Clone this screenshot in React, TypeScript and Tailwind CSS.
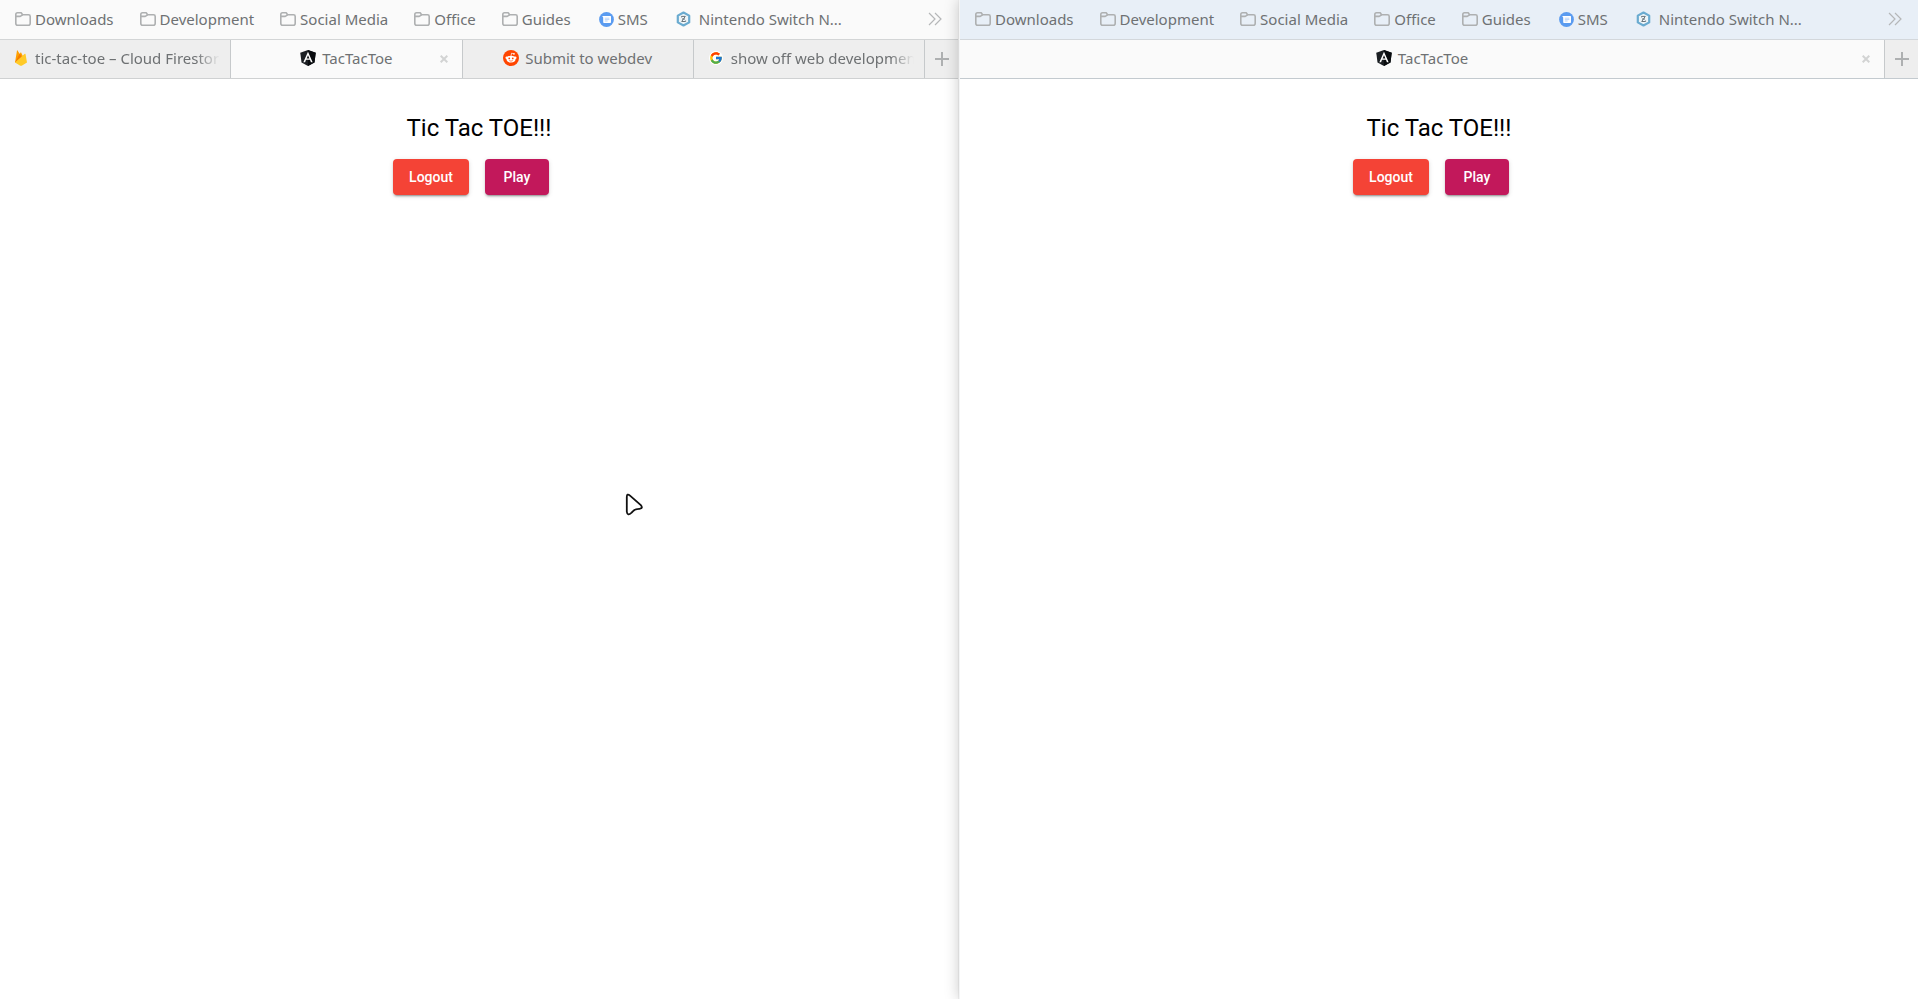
import type { ReactNode } from "react";
import { FcGoogle } from "react-icons/fc";

function FolderIcon() {
  return (
    <svg className="h-4 w-4 shrink-0" viewBox="0 0 16 16" fill="none" stroke="#aeb0b1" strokeWidth="1.6" strokeLinejoin="round">
      <path d="M2.5 1.8H6.2L7.6 3.8H13.5Q15.2 3.8 15.2 5.4V12.2Q15.2 14.2 13.4 14.2H2.6Q.8 14.2 .8 12.2V3.5Q.8 1.8 2.5 1.8Z" />
      <path d="M1 5.4H5.2L7.6 3.8" />
    </svg>
  );
}

function SmsIcon() {
  return (
    <svg className="h-[15px] w-[15px] shrink-0" viewBox="0 0 15 15">
      <circle cx="7.5" cy="7.5" r="7.4" fill="#5a9bf0" />
      <path d="M3.2 4H11.4Q12 4 12 4.6V10.2Q12 11 11.2 11H5Q4.2 11 4.2 10.2V5.6Z" fill="#fff" />
      <path d="M5.8 6.2H10.4M5.8 7.6H10.4M5.8 9H8.6" stroke="#a9caf7" strokeWidth=".8" />
    </svg>
  );
}

function HexIcon() {
  return (
    <svg className="h-4 w-[15px] shrink-0" viewBox="0 0 15 16">
      <path d="M7.5 1.5L13.2 4.6V11.4L7.5 14.5L1.8 11.4V4.6Z" fill="#eef4f7" stroke="#6aabd0" strokeWidth="2.2" strokeLinejoin="round" />
      <path d="M5.5 6.4V5.4H9.3L5.7 10.5H9.6V9.5M6 8H9" fill="none" stroke="#69747b" strokeWidth="1" />
    </svg>
  );
}

function FirebaseIcon() {
  return (
    <svg className="h-4 w-3 shrink-0" viewBox="0 0 12 16">
      <path d="M0 12.6L2 .5Q2.2 0 2.6 .4L4.7 4.1L5.5 2.6Q5.8 2.2 6.1 2.6L11 12.6Z" fill="#ffa000" />
      <path d="M0 12.6L6.9 6.9L4.7 3.6Z" fill="#f57c00" />
      <path d="M0 12.6L9.8 3.8Q10.4 3.4 10.5 4.1L12 12.6L6.7 15.7Q6 16 5.3 15.7Z" fill="#ffca28" />
    </svg>
  );
}

function AngularIcon() {
  return (
    <svg className="h-4 w-4 shrink-0" viewBox="27 30 196 200">
      <path d="M125 30L28 63.2L44 186.3L125 230L206 186.3L222 63.2Z" fill="#1b1f23" />
      <path d="M125 30V230L206 186.3L222 63.2Z" fill="#090c0f" />
      <path d="M125 52.1L66.8 182.6H88.5L100.2 153.4H149.6L161.3 182.6H183ZM142 135.4H108L125 94.5Z" fill="#fff" />
    </svg>
  );
}

function RedditIcon() {
  return (
    <svg className="h-4 w-4 shrink-0" viewBox="0 0 20 20">
      <circle cx="10" cy="10" r="10" fill="#ff4500" />
      <path d="M10.1 7.2L10.7 4L13.3 4.6" fill="none" stroke="#fff" strokeWidth=".9" />
      <circle cx="13.7" cy="4.7" r="1.1" fill="#fff" />
      <circle cx="4.7" cy="9.7" r="1.6" fill="#fff" />
      <circle cx="15.3" cy="9.7" r="1.6" fill="#fff" />
      <ellipse cx="10" cy="11.4" rx="5.7" ry="4.3" fill="#fff" />
      <circle cx="7.8" cy="10.6" r="1.1" fill="#ff4500" />
      <circle cx="12.2" cy="10.6" r="1.1" fill="#ff4500" />
      <path d="M7.8 13.2Q10 14.7 12.2 13.2" fill="none" stroke="#ff4500" strokeWidth=".8" />
    </svg>
  );
}

function GoogleIcon() {
  return (
    <span className="grid h-3.5 w-3.5 shrink-0 place-items-center rounded-full bg-white">
      <FcGoogle size={14} />
    </span>
  );
}

const folders = ["Downloads", "Development", "Social Media", "Office", "Guides"];

function BookmarksBar({ className }: { className: string }) {
  return (
    <nav aria-label="Bookmarks" className={`flex h-10 items-center justify-between border-b pb-px pl-[15px] pr-4 ${className}`}>
      <div className="flex items-center gap-[26px] whitespace-nowrap">
        {folders.map((name) => (
          <a key={name} href="#" className="flex items-center gap-1">
            <FolderIcon />
            {name}
          </a>
        ))}
        <a href="#" className="flex items-center gap-1 px-0.5">
          <SmsIcon />
          SMS
        </a>
        <a href="#" className="flex items-center gap-2">
          <HexIcon />
          Nintendo Switch N...
        </a>
      </div>
      <button aria-label="More bookmarks">
        <svg className="h-3.5 w-3.5" viewBox="0 0 14 14" fill="none" stroke="#b5b7b8" strokeWidth="1.2">
          <path d="M1 1L7 7L1 13M7 1L13 7L7 13" />
        </svg>
      </button>
    </nav>
  );
}

type TabProps = { icon: ReactNode; title: string; active?: boolean; faded?: boolean };

function Tab({ icon, title, active, faded }: TabProps) {
  return (
    <div className={`relative flex min-w-0 flex-1 border-r border-[#c6c9cb] ${active ? "bg-[#fafafa]" : "bg-[#eeeeee]"}`}>
      <button
        className={`flex min-w-0 flex-1 items-center whitespace-nowrap pb-0.5 ${faded ? "justify-start gap-2 pl-[15px] pr-2.5" : "justify-center gap-1.5"}`}
      >
        {icon}
        <span className={faded ? "min-w-0 flex-1 overflow-hidden text-left [mask-image:linear-gradient(to_right,black_calc(100%-24px),transparent)]" : ""}>
          {title}
        </span>
      </button>
      {active && (
        <button aria-label="Close tab" className="absolute inset-y-0 right-3.5 my-auto h-2 w-2">
          <svg className="h-2 w-2" viewBox="0 0 8 8" stroke="#d2d3d3" strokeWidth="2">
            <path d="M.7 .7L7.3 7.3M7.3 .7L.7 7.3" />
          </svg>
        </button>
      )}
    </div>
  );
}

function TabBar({ children, className }: { children: ReactNode; className: string }) {
  return (
    <div className={`flex h-[39px] border-b ${className}`}>
      {children}
      <button aria-label="New tab" className="grid w-[33px] shrink-0 place-items-center bg-[#eeeeee]">
        <svg className="h-3.5 w-3.5" viewBox="0 0 14 14" stroke="#aeb0b1" strokeWidth="2">
          <path d="M7 0V14M0 7H14" />
        </svg>
      </button>
    </div>
  );
}

function Game() {
  const button = "h-9 rounded px-4 text-sm font-medium text-white shadow-[0_3px_1px_-2px_rgba(0,0,0,0.2),0_2px_2px_0_rgba(0,0,0,0.14),0_1px_5px_0_rgba(0,0,0,0.12)]";
  return (
    <main className="flex flex-col items-center gap-[15px] pt-[33px] font-[Roboto,sans-serif] text-black">
      <h1 className="text-2xl leading-8">Tic Tac TOE!!!</h1>
      <div className="flex gap-4 pr-4">
        <button className={`bg-[#f44336] ${button}`}>Logout</button>
        <button className={`min-w-16 bg-[#c2185b] ${button}`}>Play</button>
      </div>
    </main>
  );
}

export default function App() {
  return (
    <div className="relative grid min-h-screen grid-cols-2 overflow-hidden bg-white font-['Noto_Sans',sans-serif] text-[15px] leading-5 text-[#6e7173]">
      <section className="min-w-0 border-r border-[#f4f4f4]">
        <BookmarksBar className="border-[#d3d5d6] bg-[#fafafa]" />
        <TabBar className="border-[#cfd1d2]">
          <Tab icon={<FirebaseIcon />} title="tic-tac-toe – Cloud Firestore" faded />
          <Tab icon={<AngularIcon />} title="TacTacToe" active />
          <Tab icon={<RedditIcon />} title="Submit to webdev" />
          <Tab icon={<GoogleIcon />} title="show off web development" faded />
        </TabBar>
        <Game />
      </section>
      <section className="min-w-0 border-l border-[#f4f5f6] bg-white shadow-[0_0_14px_rgba(0,0,0,0.22)]">
        <BookmarksBar className="border-[#d3d7db] bg-[#e8eff7]" />
        <TabBar className="border-[#c3cacf]">
          <Tab icon={<AngularIcon />} title="TacTacToe" active />
        </TabBar>
        <Game />
      </section>
      <svg className="pointer-events-none absolute left-[625px] top-[493px] h-6 w-5" viewBox="0 0 20 24">
        <path
          d="M1.8 4Q1.8 0 5 2.6L15.8 12.2Q18.4 15.2 14.6 15.8Q9.6 15.6 6.6 19.6Q2.4 23.6 1.8 18.6Z"
          fill="#fff"
          stroke="#111"
          strokeWidth="1.8"
        />
      </svg>
    </div>
  );
}
